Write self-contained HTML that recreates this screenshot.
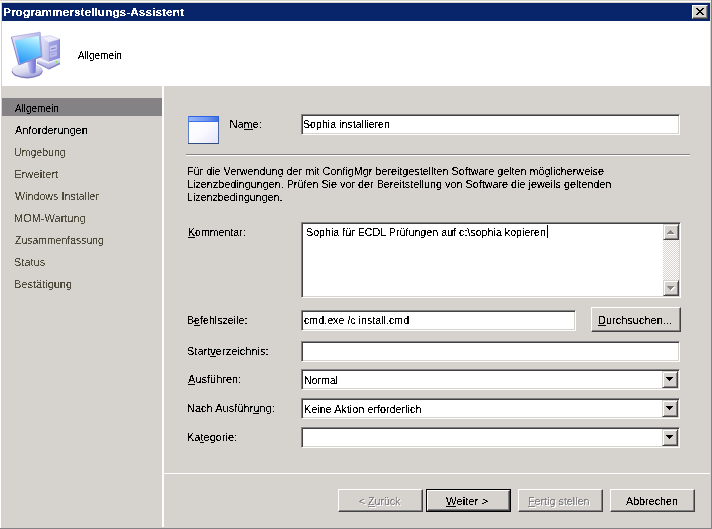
<!DOCTYPE html>
<html lang="de">
<head>
<meta charset="utf-8">
<title>Programmerstellungs-Assistent</title>
<style>
html,body{margin:0;padding:0;}
body{width:712px;height:529px;overflow:hidden;background:#d6d3ce;position:relative;
  font-family:"Liberation Sans","DejaVu Sans",sans-serif;font-size:11px;line-height:13px;color:#000;}
.a{position:absolute;}
.t{position:absolute;white-space:nowrap;height:13px;line-height:13px;transform-origin:0 0;filter:url(#crisp);}
u{text-decoration:underline;text-underline-offset:1px;text-decoration-thickness:1px;}
/* window frame */
#f-top0{left:0;top:0;width:712px;height:1px;background:#d6d3ce;}
#f-top1{left:0;top:1px;width:711px;height:1px;background:#fff;}
#f-left0{left:0;top:1px;width:1px;height:527px;background:#fff;}
#f-right1{left:711px;top:0;width:1px;height:529px;background:#848284;}
#f-bot1{left:0;top:528px;width:712px;height:1px;background:#848284;}
#titlebar{left:2px;top:3px;width:708px;height:18px;background:#08246b;}
#title{left:4px;top:6px;color:#fff;font-weight:bold;}
#closebtn{left:692px;top:5px;width:16px;height:14px;background:#d6d3ce;box-sizing:border-box;
  border:1px solid;border-color:#fff #424142 #424142 #fff;box-shadow:inset -1px -1px 0 #848284;}
#header{left:2px;top:21px;width:708px;height:65px;background:#fff;}
#htext{left:78px;top:49px;}
/* sidebar */
#vsep{left:162px;top:86px;width:2px;height:441px;background:#fff;}
#sel{left:2px;top:98px;width:160px;height:18px;background:#848284;}
.nav{left:15px;}
.dis{color:#524d3e;}
/* fields */
.edit{position:absolute;box-sizing:border-box;background:#fff;border:1px solid;border-color:#848284 #fff #fff #848284;
  box-shadow:inset 1px 1px 0 #424142, inset -1px -1px 0 #d6d3ce;}
.btn{position:absolute;box-sizing:border-box;background:#d6d3ce;border:1px solid;border-color:#fff #424142 #424142 #fff;
  box-shadow:inset -1px -1px 0 #848284;}
.sbtn{position:absolute;box-sizing:border-box;background:#d6d3ce;border:1px solid;border-color:#d6d3ce #424142 #424142 #d6d3ce;
  box-shadow:inset 1px 1px 0 #fff, inset -1px -1px 0 #848284;}
.distext{color:#848284;text-shadow:1px 1px 0 #fff;}
.hr{position:absolute;height:1px;}
</style>
</head>
<body>
<svg class="a" width="0" height="0" style="left:0;top:0"><defs>
<filter id="crisp" color-interpolation-filters="sRGB"><feComponentTransfer><feFuncA type="discrete" tableValues="0 0 0 0 0 0 0 0 0 1 1 1 1 1 1 1 1 1 1 1"/></feComponentTransfer></filter>
</defs></svg>
<!-- frame -->
<div class="a" id="f-top0"></div><div class="a" id="f-top1"></div><div class="a" id="f-left0"></div>
<div class="a" id="f-right1"></div><div class="a" id="f-bot1"></div>
<div class="a" id="titlebar"></div>
<div class="t" id="title" style="left:3.00px;top:6px;transform:scaleX(1.0839)">Programmerstellungs-Assistent</div>
<div class="a" id="closebtn">
  <svg class="a" style="left:3px;top:2px" width="8" height="7" viewBox="0 0 8 7"><path d="M0 0h2v1h1v1h2v-1h1v-1h2v1h-1v1h-1v1h-1v1h1v1h1v1h1v1h-2v-1h-1v-1h-2v1h-1v1h-2v-1h1v-1h1v-1h1v-1h-1v-1h-1v-1h-1z" fill="#000"/></svg>
</div>
<div class="a" id="header"></div>
<svg class="a" style="left:0;top:21px" width="80" height="65" viewBox="0 21 80 65">
 <defs>
  <linearGradient id="gScr" x1="0.65" y1="0" x2="0.35" y2="1"><stop offset="0" stop-color="#c8f6ff"/><stop offset="0.4" stop-color="#74d0ff"/><stop offset="1" stop-color="#2a94f4"/></linearGradient>
  <linearGradient id="gFrm" x1="0" y1="0" x2="1" y2="1"><stop offset="0" stop-color="#ececfa"/><stop offset="0.5" stop-color="#b8b8e6"/><stop offset="1" stop-color="#7c7cc8"/></linearGradient>
  <linearGradient id="gBase" x1="0.2" y1="0" x2="0.8" y2="1"><stop offset="0" stop-color="#f6f6fc"/><stop offset="0.55" stop-color="#d6d6ee"/><stop offset="1" stop-color="#9a9ad4"/></linearGradient>
  <linearGradient id="gStand" x1="0" y1="0" x2="1" y2="0"><stop offset="0" stop-color="#d4d4f8"/><stop offset="0.5" stop-color="#9898e6"/><stop offset="1" stop-color="#6c6cd0"/></linearGradient>
  <linearGradient id="gSide" x1="0" y1="0" x2="1" y2="1"><stop offset="0" stop-color="#e8e8fb"/><stop offset="1" stop-color="#b6b6e4"/></linearGradient>
  <linearGradient id="gFront" x1="0" y1="0" x2="1" y2="1"><stop offset="0" stop-color="#aaaaea"/><stop offset="1" stop-color="#8484d6"/></linearGradient>
  <linearGradient id="gLow" x1="0" y1="0" x2="0" y2="1"><stop offset="0" stop-color="#e4e4f8"/><stop offset="1" stop-color="#a2a2da"/></linearGradient>
 </defs>
 <!-- tower -->
 <polygon points="41.2,37.2 50.2,35.6 59.6,39.2 48.6,42.6" fill="#eeeefc" stroke="#b4b4e2" stroke-width="0.5"/>
 <polygon points="40.8,37.6 48.4,42.6 48.4,62.5 40.8,59.5" fill="url(#gSide)"/>
 <polygon points="48.4,42.6 59.8,39.3 59.8,58.6 48.4,62.6" fill="url(#gFront)"/>
 <polygon points="59.2,39.6 59.9,39.3 59.9,64 59.2,64.4" fill="#7676c4"/>
 <polygon points="49.8,46.6 56.8,44.6 56.8,50 49.8,52" fill="#c8c8f0"/>
 <polygon points="49.8,53.2 56.8,51.2 56.8,55.8 49.8,57.8" fill="#bcbcec"/>
 <polygon points="50.8,48.6 55.8,47.2 55.8,48.4 50.8,49.8" fill="#8484c8"/>
 <polygon points="50.8,54.6 55.8,53.2 55.8,54 50.8,55.4" fill="#9c9cd8"/>
 <polygon points="36.8,60 40.8,58.4 48.5,62 59.9,58.2 59.9,64.2 49,69.6 37,63.4" fill="url(#gLow)"/>
 <polygon points="36.8,60 48.6,63.4 59.9,58.8 59.9,58.2 48.5,62 40.8,58.4" fill="#f2f2fd"/>
 <polygon points="49,69.6 59.9,64.2 59.9,62.6 49,68" fill="#8282c6"/>
 <polygon points="37,63.4 49,69.6 49,68 37,62" fill="#9494ce"/>
 <rect x="55.8" y="60.8" width="1.7" height="2.2" fill="#78f058"/>
 <!-- base -->
 <ellipse cx="27.2" cy="71.2" rx="15.4" ry="7.3" fill="#7c7cc2"/>
 <ellipse cx="27.2" cy="70.3" rx="15" ry="6.6" fill="url(#gBase)"/>
 <!-- stand -->
 <path d="M27,62 L36,58.8 L35.6,72.4 Q32.5,74.4 29.6,73 Z" fill="url(#gStand)"/>
 <!-- monitor -->
 <polygon points="11.4,37 40.2,32.2 42.1,56.6 18.8,64.8" fill="url(#gFrm)"/>
 <path d="M11.4,37 L18.8,64.8 L42.1,56.6" fill="none" stroke="#7c7cc8" stroke-width="0.9"/>
 <path d="M11.4,37 L40.2,32.2 L42.1,56.6" fill="none" stroke="#9c9cd8" stroke-width="0.7"/>
 <polygon points="14.8,40.4 38.8,35.8 40.8,55.8 20,63.6" fill="url(#gScr)"/>
</svg>
<div class="t" id="htext" style="left:78.00px;top:49px;transform:scaleX(0.9062)">Allgemein</div>

<!-- sidebar -->
<div class="a" id="vsep"></div>
<div class="a" id="sel"></div>
<div class="t nav" id="n1" style="left:15.00px;top:102px;transform:scaleX(0.9062)">Allgemein</div>
<div class="t nav" id="n2" style="left:15.00px;top:124px;transform:scaleX(1.0004)">Anforderungen</div>
<div class="t nav dis" id="n3" style="left:14.00px;top:146px;transform:scaleX(0.9615)">Umgebung</div>
<div class="t nav dis" id="n4" style="left:14.00px;top:168px;transform:scaleX(1.0249)">Erweitert</div>
<div class="t nav dis" id="n5" style="left:15.00px;top:190px;transform:scaleX(0.9733)">Windows Installer</div>
<div class="t nav dis" id="n6" style="left:14.00px;top:212px;transform:scaleX(1.0000)">MOM-Wartung</div>
<div class="t nav dis" id="n7" style="left:15.00px;top:234px;transform:scaleX(0.9495)">Zusammenfassung</div>
<div class="t nav dis" id="n8" style="left:14.00px;top:256px;transform:scaleX(1.0000)">Status</div>
<div class="t nav dis" id="n9" style="left:14.00px;top:278px;transform:scaleX(1.0000)">Bestätigung</div>

<!-- main -->
<svg class="a" style="left:188px;top:116px" width="31" height="28" viewBox="0 0 31 28">
 <defs>
  <linearGradient id="wB" x1="0" y1="0" x2="1" y2="1"><stop offset="0" stop-color="#ffffff"/><stop offset="0.5" stop-color="#fbfbff"/><stop offset="1" stop-color="#e2e2fb"/></linearGradient>
  <linearGradient id="wT" x1="0" y1="0" x2="1" y2="0"><stop offset="0" stop-color="#9bb8fa"/><stop offset="0.6" stop-color="#6f97f2"/><stop offset="1" stop-color="#3f6fdc"/></linearGradient>
  <linearGradient id="wL" x1="0" y1="0" x2="0" y2="1"><stop offset="0" stop-color="#4a7ae6"/><stop offset="1" stop-color="#6a80b4"/></linearGradient>
 </defs>
 <rect x="0" y="0" width="31" height="28" fill="url(#wB)"/>
 <rect x="0" y="0" width="31" height="6" fill="url(#wT)"/>
 <rect x="0" y="0" width="31" height="1" fill="#2e63e2"/>
 <rect x="0" y="5" width="31" height="1" fill="#3c70e8"/>
 <rect x="0" y="0" width="1" height="28" fill="url(#wL)"/>
 <rect x="30" y="6" width="1" height="22" fill="#4a6596"/>
 <rect x="30" y="0" width="1" height="6" fill="#2f5fd0"/>
 <rect x="0" y="27" width="31" height="1" fill="#2f4d7e"/>
</svg>
<div class="t" id="lname" style="left:229.50px;top:118px;transform:scaleX(1.0000)">Na<u>m</u>e:</div>
<div class="edit" style="left:301px;top:114px;width:379px;height:21px"></div>
<div class="t" id="vname" style="left:303.00px;top:118px;transform:scaleX(0.9673)">Sophia installieren</div>

<div class="hr" style="left:186px;top:154px;width:504px;background:#848284"></div>
<div class="hr" style="left:186px;top:155px;width:504px;background:#fff"></div>

<div class="t" id="p1" style="left:187.00px;top:165px;transform:scaleX(0.9812)">Für die Verwendung der mit ConfigMgr bereitgestellten Software gelten möglicherweise</div>
<div class="t" id="p2" style="left:187.00px;top:178px;transform:scaleX(0.9815)">Lizenzbedingungen. Prüfen Sie vor der Bereitstellung von Software die jeweils geltenden</div>
<div class="t" id="p3" style="left:187.00px;top:191px;transform:scaleX(0.9696)">Lizenzbedingungen.</div>

<div class="t" id="lkom" style="left:188.00px;top:226px;transform:scaleX(0.9610)"><u>K</u>ommentar:</div>
<div class="edit" style="left:301px;top:222px;width:380px;height:76px"></div>
<div class="a" style="left:663px;top:224px;width:16px;height:72px;background:repeating-conic-gradient(#fff 0 25%,#d6d3ce 0 50%) 0 0/2px 2px"></div>
<div class="sbtn" style="left:663px;top:224px;width:16px;height:16px">
 <svg class="a" style="left:3px;top:5px" width="9" height="6" viewBox="0 0 9 6"><path d="M3 0h1v1h1v1h1v1h1v1h-7v-1h1v-1h1v-1h1z" transform="translate(1,1)" fill="#fff"/><path d="M3 0h1v1h1v1h1v1h1v1h-7v-1h1v-1h1v-1h1z" fill="#848284"/></svg>
</div>
<div class="sbtn" style="left:663px;top:280px;width:16px;height:16px">
 <svg class="a" style="left:3px;top:5px" width="9" height="6" viewBox="0 0 9 6"><path d="M0 0h7v1h-1v1h-1v1h-1v1h-1v-1h-1v-1h-1v-1h-1z" transform="translate(1,1)" fill="#fff"/><path d="M0 0h7v1h-1v1h-1v1h-1v1h-1v-1h-1v-1h-1v-1h-1z" fill="#848284"/></svg>
</div>
<div class="a" style="left:547px;top:225px;width:1px;height:13px;background:#000"></div>
<div class="t" id="vkom" style="left:306.00px;top:226px;transform:scaleX(0.9725)">Sophia für ECDL Prüfungen auf c:\sophia kopieren</div>

<div class="t" id="lbef" style="left:187.00px;top:314px;transform:scaleX(0.9684)">B<u>e</u>fehlszeile:</div>
<div class="edit" style="left:301px;top:310px;width:275px;height:21px"></div>
<div class="t" id="vbef" style="left:304.00px;top:314px;transform:scaleX(0.9722)">cmd.exe /c install.cmd</div>
<div class="btn" style="left:591px;top:307px;width:90px;height:25px"></div>
<div class="t" id="bdur" style="left:598.00px;top:314px;transform:scaleX(1.0000)"><u>D</u>urchsuchen...</div>

<div class="t" id="lsta" style="left:187.00px;top:345px;transform:scaleX(1.0035)">Start<u>v</u>erzeichnis:</div>
<div class="edit" style="left:301px;top:341px;width:379px;height:21px"></div>

<div class="t" id="laus" style="left:188.00px;top:373px;transform:scaleX(1.0000)"><u>A</u>usführen:</div>
<div class="edit" style="left:301px;top:369px;width:379px;height:21px"></div>
<div class="sbtn" style="left:662px;top:371px;width:16px;height:17px"><svg class="a" style="left:3px;top:5px" width="7" height="4" viewBox="0 0 7 4"><path d="M0 0h7v1h-1v1h-1v1h-1v1h-1v-1h-1v-1h-1v-1h-1z" fill="#000"/></svg></div>
<div class="t" id="vaus" style="left:304.00px;top:374px;transform:scaleX(0.9636)">Normal</div>

<div class="t" id="lnach" style="left:187.00px;top:402px;transform:scaleX(1.0026)">Nach Ausführ<u>u</u>ng:</div>
<div class="edit" style="left:301px;top:398px;width:379px;height:21px"></div>
<div class="sbtn" style="left:662px;top:400px;width:16px;height:17px"><svg class="a" style="left:3px;top:5px" width="7" height="4" viewBox="0 0 7 4"><path d="M0 0h7v1h-1v1h-1v1h-1v1h-1v-1h-1v-1h-1v-1h-1z" fill="#000"/></svg></div>
<div class="t" id="vnach" style="left:304.00px;top:403px;transform:scaleX(0.9851)">Keine Aktion erforderlich</div>

<div class="t" id="lkat" style="left:187.00px;top:431px;transform:scaleX(1.0000)">Ka<u>t</u>egorie:</div>
<div class="edit" style="left:301px;top:427px;width:379px;height:21px"></div>
<div class="sbtn" style="left:662px;top:429px;width:16px;height:17px"><svg class="a" style="left:3px;top:5px" width="7" height="4" viewBox="0 0 7 4"><path d="M0 0h7v1h-1v1h-1v1h-1v1h-1v-1h-1v-1h-1v-1h-1z" fill="#000"/></svg></div>

<!-- bottom -->
<div class="hr" style="left:164px;top:473px;width:546px;background:#fff"></div>
<div class="btn" style="left:338px;top:489px;width:85px;height:23px"></div>
<div class="t distext" id="bzur" style="left:359.00px;top:495px;transform:scaleX(0.9603)">&lt; <u>Z</u>urück</div>
<div class="a" style="left:426px;top:489px;width:85px;height:23px;background:#000"></div>
<div class="btn" style="left:427px;top:490px;width:83px;height:21px"></div>
<div class="t" id="bwei" style="left:446.00px;top:495px;transform:scaleX(1.0244)"><u>W</u>eiter &gt;</div>
<div class="btn" style="left:518px;top:489px;width:85px;height:23px"></div>
<div class="t distext" id="bfer" style="left:528.40px;top:495px;transform:scaleX(0.9781)"><u>F</u>ertig stellen</div>
<div class="btn" style="left:610px;top:489px;width:85px;height:23px"></div>
<div class="t" id="babb" style="left:625.70px;top:495px;transform:scaleX(0.9755)">Abbrechen</div>
</body>
</html>
